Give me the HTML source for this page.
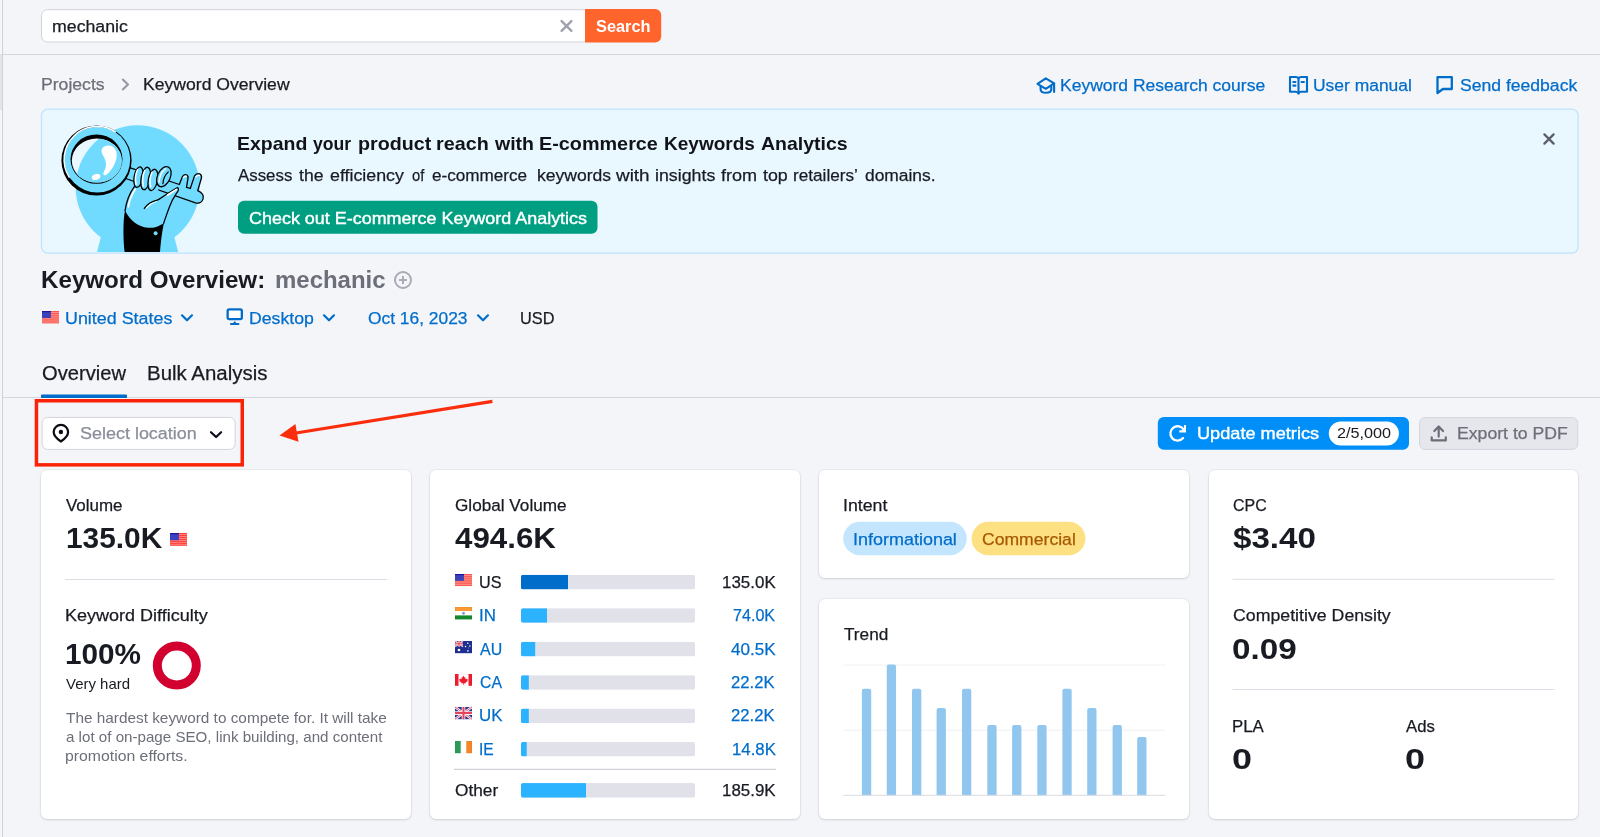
<!DOCTYPE html>
<html lang="en">
<head>
<meta charset="utf-8">
<title>Keyword Overview</title>
<style>
*{box-sizing:border-box;margin:0;padding:0}
html,body{width:1600px;height:837px;overflow:hidden}
body{background:#f4f5f9;font-family:"Liberation Sans",sans-serif;color:#191b23;position:relative}
.a{position:absolute}
.t{position:absolute;white-space:nowrap;transform-origin:0 0;display:block}
.card{position:absolute;background:#fff;border-radius:6px;box-shadow:0 0 0 1px rgba(25,27,35,.045),0 1px 2.5px rgba(25,27,35,.12)}
.hr{position:absolute;height:1px;background:#dcdee5}
.track{position:absolute;left:521px;width:174px;height:14px;background:#e0e1e9;border-radius:2px;overflow:hidden}
.track i{display:block;height:14px;background:#2bb3ff}
.bar{position:absolute;width:9.3px;background:#91c6ed;border-radius:2px 2px 0 0}
svg{position:absolute;overflow:visible}
</style>
</head>
<body>
<div style="position:absolute;left:0;top:0;width:1600px;height:837px;will-change:transform">

<!-- left edge -->
<div class="a" style="left:0;top:0;width:2px;height:837px;background:#f5f6fa"></div>
<div class="a" style="left:0;top:54px;width:2px;height:56px;background:#e3e4ea"></div>
<div class="a" style="left:2px;top:0;width:1px;height:837px;background:#cfd1d8"></div>
<!-- header + tab lines -->
<div class="a" style="left:3px;top:54px;width:1597px;height:1px;background:#d5d7de"></div>
<div class="a" style="left:3px;top:397px;width:1597px;height:1px;background:#d5d7de"></div>

<!-- cards -->
<div class="card" style="left:41px;top:470px;width:370px;height:349px"></div>
<div class="card" style="left:430px;top:470px;width:370px;height:349px"></div>
<div class="card" style="left:819px;top:470px;width:370px;height:108px"></div>
<div class="card" style="left:819px;top:599px;width:370px;height:220px"></div>
<div class="card" style="left:1209px;top:470px;width:369px;height:349px"></div>

<svg style="left:0;top:0" width="1600" height="837" viewBox="0 0 1600 837">
<rect x="41.5" y="9.7" width="548" height="32.3" rx="6" fill="#fff" stroke="#d0d3db"/>
<path d="M585 9 H655.2 a6 6 0 0 1 6 6 V36.5 a6 6 0 0 1 -6 6 H585 Z" fill="#ff642d"/>
<rect x="41.45" y="109.05" width="1536.7" height="144" rx="6.4" fill="#e9f7ff" stroke="#c0e3fe" stroke-width="1.3"/>
<path d="M41 398 V395.6 a1 1 0 0 1 1 -1 H126 a1 1 0 0 1 1 1 V398 Z" fill="#006dca"/>
<rect x="42.1" y="417.4" width="193" height="32" rx="5.5" fill="#fff" stroke="#d2d4dc"/>
<rect x="36.45" y="400.75" width="205.8" height="64.1" fill="none" stroke="#fb2307" stroke-width="3.5"/>
<path d="M492.4 401.4 L296 433" stroke="#fa2d0d" stroke-width="3.2" fill="none"/><path d="M279.5 435.5 L295.4 424.1 L298.5 441.7 Z" fill="#fa2d0d"/>
<rect x="1157.8" y="417.1" width="251.2" height="32.7" rx="6" fill="#008ff8"/>
<rect x="1328.8" y="421.5" width="70.1" height="23.9" rx="11.95" fill="#fff"/>
<rect x="1419.6" y="417.6" width="158.2" height="31.8" rx="5.5" fill="#e6e7ed" stroke="#d3d5dc"/>
<rect x="65" y="579" width="322" height="1" fill="#dcdee5"/>
<circle cx="176.8" cy="665.5" r="19.5" fill="none" stroke="#d1002f" stroke-width="9"/>
<defs><clipPath id="tk0"><rect x="521" y="574.8" width="174" height="14.6" rx="2"/></clipPath><clipPath id="tk1"><rect x="521" y="608.2" width="174" height="14.6" rx="2"/></clipPath><clipPath id="tk2"><rect x="521" y="641.8" width="174" height="14.6" rx="2"/></clipPath><clipPath id="tk3"><rect x="521" y="675.2" width="174" height="14.6" rx="2"/></clipPath><clipPath id="tk4"><rect x="521" y="708.6" width="174" height="14.6" rx="2"/></clipPath><clipPath id="tk5"><rect x="521" y="741.9" width="174" height="14.6" rx="2"/></clipPath><clipPath id="tk6"><rect x="521" y="783.1" width="174" height="14.6" rx="2"/></clipPath></defs>
<g clip-path="url(#tk0)"><rect x="521" y="574.8" width="174" height="14.6" fill="#e0e1e9"/><rect x="521" y="574.8" width="47" height="14.6" fill="#006dca"/></g>
<g clip-path="url(#tk1)"><rect x="521" y="608.2" width="174" height="14.6" fill="#e0e1e9"/><rect x="521" y="608.2" width="26" height="14.6" fill="#2bb3ff"/></g>
<g clip-path="url(#tk2)"><rect x="521" y="641.8" width="174" height="14.6" fill="#e0e1e9"/><rect x="521" y="641.8" width="14.2" height="14.6" fill="#2bb3ff"/></g>
<g clip-path="url(#tk3)"><rect x="521" y="675.2" width="174" height="14.6" fill="#e0e1e9"/><rect x="521" y="675.2" width="7.8" height="14.6" fill="#2bb3ff"/></g>
<g clip-path="url(#tk4)"><rect x="521" y="708.6" width="174" height="14.6" fill="#e0e1e9"/><rect x="521" y="708.6" width="7.8" height="14.6" fill="#2bb3ff"/></g>
<g clip-path="url(#tk5)"><rect x="521" y="741.9" width="174" height="14.6" fill="#e0e1e9"/><rect x="521" y="741.9" width="5.7" height="14.6" fill="#2bb3ff"/></g>
<g clip-path="url(#tk6)"><rect x="521" y="783.1" width="174" height="14.6" fill="#e0e1e9"/><rect x="521" y="783.1" width="65" height="14.6" fill="#2bb3ff"/></g>
<rect x="454" y="768.8" width="322" height="1" fill="#c4c7cf"/>
<rect x="843.2" y="521.8" width="123.5" height="33.4" rx="16.7" fill="#c4e5fe"/>
<rect x="971.6" y="521.8" width="113.8" height="33.4" rx="16.7" fill="#fce081"/>
<rect x="843.2" y="664.6" width="322.2" height="1" fill="#eff0f4"/>
<rect x="843.2" y="729.7" width="322.2" height="1" fill="#eff0f4"/>
<path d="M861.90 795.4 V690.75 a2 2 0 0 1 2 -2 H869.20 a2 2 0 0 1 2 2 V795.4 Z" fill="#91c7ee"/>
<path d="M886.75 795.4 V666.60 a2 2 0 0 1 2 -2 H894.05 a2 2 0 0 1 2 2 V795.4 Z" fill="#91c7ee"/>
<path d="M912.00 795.4 V690.75 a2 2 0 0 1 2 -2 H919.30 a2 2 0 0 1 2 2 V795.4 Z" fill="#91c7ee"/>
<path d="M936.60 795.4 V710.00 a2 2 0 0 1 2 -2 H943.90 a2 2 0 0 1 2 2 V795.4 Z" fill="#91c7ee"/>
<path d="M962.00 795.4 V690.75 a2 2 0 0 1 2 -2 H969.30 a2 2 0 0 1 2 2 V795.4 Z" fill="#91c7ee"/>
<path d="M987.30 795.4 V727.00 a2 2 0 0 1 2 -2 H994.60 a2 2 0 0 1 2 2 V795.4 Z" fill="#91c7ee"/>
<path d="M1012.10 795.4 V727.00 a2 2 0 0 1 2 -2 H1019.40 a2 2 0 0 1 2 2 V795.4 Z" fill="#91c7ee"/>
<path d="M1037.30 795.4 V727.00 a2 2 0 0 1 2 -2 H1044.60 a2 2 0 0 1 2 2 V795.4 Z" fill="#91c7ee"/>
<path d="M1062.40 795.4 V690.75 a2 2 0 0 1 2 -2 H1069.70 a2 2 0 0 1 2 2 V795.4 Z" fill="#91c7ee"/>
<path d="M1087.20 795.4 V710.00 a2 2 0 0 1 2 -2 H1094.50 a2 2 0 0 1 2 2 V795.4 Z" fill="#91c7ee"/>
<path d="M1112.60 795.4 V727.00 a2 2 0 0 1 2 -2 H1119.90 a2 2 0 0 1 2 2 V795.4 Z" fill="#91c7ee"/>
<path d="M1137.20 795.4 V739.00 a2 2 0 0 1 2 -2 H1144.50 a2 2 0 0 1 2 2 V795.4 Z" fill="#91c7ee"/>
<rect x="843.2" y="794.8" width="322.2" height="1" fill="#d9dbe3"/>
<rect x="1232.5" y="578.8" width="322" height="1" fill="#dcdee5"/>
<rect x="1232.5" y="689" width="322" height="1" fill="#dcdee5"/>
</svg>
<svg style="left:42.1px;top:109.7px;overflow:hidden" width="220" height="142.7" viewBox="42.1 109.7 220 142.7">
<defs><clipPath id="lens"><ellipse cx="96.9" cy="160.3" rx="25" ry="22"/></clipPath></defs>
<!-- keyhole -->
<g fill="#70dbff"><circle cx="137.7" cy="187" r="62"/><path d="M101.2 236 L96 256 H179.4 L174.2 236 Z"/></g>
<!-- key shaft + teeth -->
<g fill="#70dbff" stroke="#000" stroke-width="1.3" stroke-linejoin="round">
<path d="M129 167 L179.4 184.2 L182.4 176.6 Q184 173.4 186.6 174.6 Q188.8 175.8 188 178.6 L186.6 187 L190.4 188.2 L194.6 175.6 Q196.6 172.4 199.8 173.6 Q202.4 175 201.4 178.2 L197.8 190.4 Q204.6 193.6 203.2 198.6 Q201.2 204 195.6 202.6 L125.8 178.2 Z"/>
</g>
<path d="M183.6 177.4 Q184.8 175.6 186.4 176" fill="none" stroke="#fff" stroke-width="1.4" stroke-linecap="round"/>
<path d="M196 176.4 Q197.6 174.6 199.6 175.2" fill="none" stroke="#fff" stroke-width="1.4" stroke-linecap="round"/>
<!-- hand: palm + thumb -->
<path d="M125.1 210.6 C126.4 201 129.6 193 134.6 186 L158 186 L159.3 198.8 C165.6 194.6 171.8 190.6 177.6 187.2 C179.6 188.4 178.4 190.8 176.2 193.6 C173.2 198 171 202.6 169.2 207.4 C167.4 212.6 165.4 217.8 163.8 223 L160 232 H128 Z" fill="#70dbff"/>
<g fill="none" stroke="#000" stroke-width="1.3" stroke-linecap="round" stroke-linejoin="round">
<path d="M125.1 210.6 C126.4 201 129.6 193 134.6 186"/>
<path d="M144.4 208.2 C148 203.2 153 200.8 157.2 199.9 L159.3 198.8 C165.6 194.6 171.8 190.6 177.6 187.2 C179.6 188.4 178.4 190.8 176.2 193.6 C173.2 198 171 202.6 169.2 207.4 C167.4 212.6 165.4 217.8 163.8 223"/>
</g>
<path d="M128.4 206.6 C129.6 199.4 132 193.8 135.6 188.8" fill="none" stroke="#fff" stroke-width="1.7" stroke-linecap="round"/>
<path d="M146.6 207.6 C149.8 204 153.2 202.2 156.6 201.4" fill="none" stroke="#fff" stroke-width="1.1" stroke-linecap="round" opacity=".9"/>
<path d="M167.6 195 C171 192.6 174.2 190.6 176.6 189.2" fill="none" stroke="#fff" stroke-width="1.7" stroke-linecap="round"/>
<!-- sleeve -->
<path d="M125.1 210.2 C123 221 123 240 125.2 256 H159.8 C160.4 246 161.6 234 164 222.6 C158 227.2 150 228 148.1 227.4 C138 226.6 130 220 125.1 210.2 Z" fill="#000"/>
<circle cx="155.7" cy="233" r="2" fill="#70dbff"/>
<!-- fingers -->
<g fill="#70dbff" stroke="#000" stroke-width="1.3">
<ellipse cx="138.6" cy="176.8" rx="4.4" ry="10.4" transform="rotate(10 138.6 176.8)"/>
<ellipse cx="145.8" cy="178.2" rx="4.6" ry="11.4" transform="rotate(10 145.8 178.2)"/>
<ellipse cx="153" cy="179.6" rx="4.6" ry="10.8" transform="rotate(11 153 179.6)"/>
<ellipse cx="164" cy="176.4" rx="6.4" ry="10.6" transform="rotate(24 164 176.4)"/>
</g>
<g fill="none" stroke="#fff" stroke-width="1.4" stroke-linecap="round">
<path d="M137.6 169.4 C135.6 173.8 135.2 179.6 136.2 184"/>
<path d="M144.8 170.2 C142.8 174.8 142.4 181 143.4 185.8"/>
<path d="M152.2 171.8 C150.2 176 149.8 182 150.8 186.4"/>
<path d="M165.4 168.4 C161.6 171.6 159.4 176.8 159.2 181.8"/>
</g>
<path d="M168.4 171.6 C165.2 174.6 163.2 178.8 163 183.4" fill="none" stroke="#000" stroke-width="1.2" stroke-linecap="round"/>
<!-- magnifier ring -->
<circle cx="96.6" cy="160.2" r="35.1" fill="#000"/>
<circle cx="97.4" cy="159.3" r="32.9" fill="#70dbff"/>
<path d="M69.24 176.89 A33.2 33.2 0 0 1 115.48 131.46" fill="none" stroke="#fff" stroke-width="1.5" stroke-linecap="round"/>
<ellipse cx="96.6" cy="158.8" rx="26" ry="24.7" fill="#000"/>
<ellipse cx="96.9" cy="160.3" rx="25" ry="22" fill="#e9f7ff"/>
<g clip-path="url(#lens)"><circle cx="137.7" cy="187" r="62" fill="#70dbff"/></g>
<!-- highlights -->
<path d="M102.4 148 C106 143.6 113.8 144.4 116.2 150.6 C118.6 158.4 113.4 168.6 106.6 174.4 C103.8 176 102.6 174 104 171.4 C107.6 165.4 106.2 160.2 103.2 155.4 C101.6 152.6 101 150 102.4 148 Z" fill="#fff"/>
<ellipse cx="96.2" cy="176.6" rx="4.4" ry="2.9" transform="rotate(-18 96.2 176.6)" fill="#fff"/>
</svg>

<svg style="left:0;top:0" width="1600" height="837" viewBox="0 0 1600 837"><rect x="238" y="200.8" width="359.5" height="33" rx="6" fill="#009f81"/></svg>

<svg style="left:560px;top:20px" width="13" height="12" viewBox="0 0 13 12"><path d="M1.6 1.1 L11.4 10.9 M11.4 1.1 L1.6 10.9" stroke="#9fa2ae" stroke-width="2.4" stroke-linecap="round" fill="none"/></svg>
<svg style="left:121px;top:78px" width="9" height="13" viewBox="0 0 9 13"><path d="M1.8 1.6 L7 6.5 L1.8 11.4" stroke="#9498a5" stroke-width="2.1" stroke-linecap="round" stroke-linejoin="round" fill="none"/></svg>
<!-- top-right link icons -->
<svg style="left:1035px;top:76px" width="22" height="20" viewBox="0 0 22 20"><g fill="none" stroke="#006dca" stroke-width="2.1" stroke-linejoin="round" stroke-linecap="round"><path d="M2.5 7.8 L10.8 2.3 L19.1 7.4 L10.8 12.8 Z"/><path d="M19.1 7.6 V16"/><path d="M5.6 10.4 V13.2 Q5.6 16.8 10.9 16.8 Q16.3 16.8 16.3 13.2 V10.4"/></g></svg>
<svg style="left:1288px;top:75px" width="22" height="21" viewBox="0 0 22 21"><g fill="none" stroke="#006dca" stroke-width="2.1" stroke-linejoin="round" stroke-linecap="round"><path d="M2 2 H7.6 Q10 2 10.5 3.3 Q11 2 13.4 2 H19 V16.8 H13.2 Q11.1 16.8 10.5 18.6 Q9.9 16.8 7.8 16.8 H2 Z"/><path d="M10.5 3.4 V18"/><path d="M5.3 7 H7.4 M5.3 10.6 H7.4 M13.6 7 H15.9" stroke-width="2.2"/></g></svg>
<svg style="left:1435px;top:75px" width="20" height="21" viewBox="0 0 20 21"><path d="M2.5 2.2 H16.8 V14 H7.9 L2.5 18 Z" fill="none" stroke="#006dca" stroke-width="2.3" stroke-linejoin="round"/></svg>

<svg style="left:1543.1px;top:132.7px" width="12" height="12" viewBox="0 0 12 12"><path d="M1.4 1.4 L10.6 10.6 M10.6 1.4 L1.4 10.6" stroke="#5c5f6b" stroke-width="2.3" stroke-linecap="round" fill="none"/></svg>
<svg style="left:394px;top:271px" width="18" height="18" viewBox="0 0 18 18"><circle cx="9" cy="9" r="8" fill="none" stroke="#a9abb6" stroke-width="2"/><path d="M9 5 V13 M5 9 H13" stroke="#a9abb6" stroke-width="2" fill="none"/></svg>
<!-- filter row icons -->
<svg style="left:42px;top:311.3px" width="17" height="12.4" viewBox="0 0 17 12.4"><rect width="17" height="12.4" fill="#fa544c"/><g fill="#ff9791"><rect y="1" width="17" height=".9"/><rect y="2.9" width="17" height=".9"/><rect y="4.8" width="17" height=".9"/><rect y="6.7" width="17" height=".9"/><rect y="8.6" width="17" height=".9"/><rect y="10.5" width="17" height=".9"/></g><rect width="8.9" height="7" fill="#3b41b9"/><rect width="8.9" height="1.2" fill="#1f169f"/></svg>
<svg style="left:180px;top:313px" width="14" height="10" viewBox="0 0 14 10"><path d="M2 2.3 L7 7.3 L12 2.3" fill="none" stroke="#006dca" stroke-width="2.2" stroke-linecap="round" stroke-linejoin="round"/></svg>
<svg style="left:225px;top:307px" width="20" height="20" viewBox="0 0 20 20"><rect x="2.65" y="2.4" width="14.2" height="9.7" rx="1.6" fill="#fff" stroke="#006dca" stroke-width="2.3"/><path d="M8.2 15.9 L9.75 14.1 L11.3 15.9 Z" fill="#006dca"/><path d="M6 17 H13.4" stroke="#006dca" stroke-width="2.1" stroke-linecap="round"/></svg>
<svg style="left:322px;top:313px" width="14" height="10" viewBox="0 0 14 10"><path d="M2 2.3 L7 7.3 L12 2.3" fill="none" stroke="#006dca" stroke-width="2.2" stroke-linecap="round" stroke-linejoin="round"/></svg>
<svg style="left:475.6px;top:313px" width="14" height="10" viewBox="0 0 14 10"><path d="M2 2.3 L7 7.3 L12 2.3" fill="none" stroke="#006dca" stroke-width="2.2" stroke-linecap="round" stroke-linejoin="round"/></svg>

<svg style="left:50px;top:421px" width="22" height="24" viewBox="0 0 22 24"><path d="M10.9 20.5 C6.3 17.5 3.7 15 3.7 11.1 A7.2 7.2 0 0 1 18.1 11.1 C18.1 15 15.5 17.5 10.9 20.5 Z" fill="none" stroke="#0c0c14" stroke-width="2.2" stroke-linejoin="round"/><circle cx="10.9" cy="11" r="2.2" fill="#0c0c14"/></svg>
<svg style="left:209px;top:429px" width="14" height="10" viewBox="0 0 14 10"><path d="M2 3.2 L7.1 8 L12.1 3.2" fill="none" stroke="#0c0c1a" stroke-width="2.2" stroke-linecap="round" stroke-linejoin="round"/></svg>

<svg style="left:1167px;top:424px" width="22" height="20" viewBox="0 0 22 20"><path d="M16.9 6 A7.2 7.2 0 1 0 16.1 14.1" fill="none" stroke="#fff" stroke-width="2.3" stroke-linecap="round"/><path d="M17.95 1.1 V7.4 H12.3" fill="none" stroke="#fff" stroke-width="2.1" stroke-linejoin="miter"/><path d="M17.9 3.4 L14.4 7 L17.9 7 Z" fill="#fff"/></svg>
<svg style="left:1429px;top:424px" width="20" height="20" viewBox="0 0 20 20"><g fill="none" stroke="#6c6e79" stroke-width="2.2" stroke-linecap="round" stroke-linejoin="round"><path d="M2.7 13.4 V16.4 H16.8 V13.4"/><path d="M9.7 2.8 V12.6"/><path d="M5.3 7 L9.7 2.6 L14.1 7"/></g></svg>

<svg style="left:169.7px;top:533px" width="17" height="12.8" viewBox="0 0 17 12.4" preserveAspectRatio="none"><rect width="17" height="12.4" fill="#ff3f38"/><g fill="#ff8781"><rect y="1" width="17" height=".9"/><rect y="2.9" width="17" height=".9"/><rect y="4.8" width="17" height=".9"/><rect y="6.7" width="17" height=".9"/><rect y="8.6" width="17" height=".9"/><rect y="10.5" width="17" height=".9"/></g><rect width="8.9" height="7" fill="#3d40c2"/><rect width="8.9" height="1.2" fill="#1f169f"/></svg>

<!-- US -->
<svg style="left:455.3px;top:574px" width="17" height="12.1" viewBox="0 0 17 12.4" preserveAspectRatio="none"><rect width="17" height="12.4" fill="#fa544c"/><g fill="#ff9791"><rect y="1" width="17" height=".9"/><rect y="2.9" width="17" height=".9"/><rect y="4.8" width="17" height=".9"/><rect y="6.7" width="17" height=".9"/><rect y="8.6" width="17" height=".9"/><rect y="10.5" width="17" height=".9"/></g><rect width="8.9" height="7" fill="#3b41b9"/><rect width="8.9" height="1.2" fill="#1f169f"/></svg>
<!-- IN -->
<svg style="left:455.3px;top:607px" width="17" height="12.4" viewBox="0 0 17 12.4"><rect width="17" height="12.4" fill="#fff"/><rect width="17" height="4" fill="#fb9a32"/><rect y="8.4" width="17" height="4" fill="#14892c"/><circle cx="8.5" cy="6.2" r="1.5" fill="#7f98d8"/><rect x=".25" y=".25" width="16.5" height="11.9" fill="none" stroke="#000" stroke-opacity=".08" stroke-width=".5"/></svg>
<!-- AU -->
<svg style="left:455.3px;top:640.5px" width="17" height="12.2" viewBox="0 0 17 12.2"><rect width="17" height="12.2" fill="#1d2f8f"/><g><rect width="8" height="5.6" fill="#2a3a98"/><path d="M0 0 L8 5.6 M8 0 L0 5.6" stroke="#fff" stroke-width="1.3"/><path d="M0 0 L8 5.6 M8 0 L0 5.6" stroke="#e8475b" stroke-width=".5"/><path d="M4 0 V5.6 M0 2.8 H8" stroke="#fff" stroke-width="1.9"/><path d="M4 0 V5.6 M0 2.8 H8" stroke="#e8344e" stroke-width="1.1"/></g><circle cx="4" cy="9" r="1.35" fill="#fff"/><circle cx="12.8" cy="2.2" r=".75" fill="#fff"/><circle cx="10.5" cy="5.6" r=".75" fill="#fff"/><circle cx="14.9" cy="5" r=".75" fill="#fff"/><circle cx="12.9" cy="9.9" r=".8" fill="#fff"/><circle cx="13.9" cy="6.9" r=".45" fill="#fff"/></svg>
<!-- CA -->
<svg style="left:455.3px;top:674px" width="17" height="11.8" viewBox="0 0 17 11.8"><rect width="17" height="11.8" fill="#fff"/><rect width="3.5" height="11.8" fill="#ee1c2e"/><rect x="13.5" width="3.5" height="11.8" fill="#ee1c2e"/><path d="M8.5 1.6 L9.4 3.4 L10.5 2.9 L10.2 5.2 L11.4 4.4 L11.7 5.2 L12.9 5.1 L12.3 6.5 L12.8 6.9 L10.4 8.7 L10.7 9.5 L8.8 9.3 L8.8 10.9 L8.2 10.9 L8.2 9.3 L6.3 9.5 L6.6 8.7 L4.2 6.9 L4.7 6.5 L4.1 5.1 L5.3 5.2 L5.6 4.4 L6.8 5.2 L6.5 2.9 L7.6 3.4 Z" fill="#ee1c2e"/><rect x=".25" y=".25" width="16.5" height="11.3" fill="none" stroke="#000" stroke-opacity=".06" stroke-width=".5"/></svg>
<!-- UK -->
<svg style="left:455.3px;top:707px" width="17" height="12.2" viewBox="0 0 17 12.2"><rect width="17" height="12.2" fill="#26348f"/><path d="M0 0 L17 12.2 M17 0 L0 12.2" stroke="#f4e9f0" stroke-width="2.6"/><path d="M0 0 L17 12.2 M17 0 L0 12.2" stroke="#e4536a" stroke-width=".9"/><path d="M8.5 0 V12.2 M0 6.1 H17" stroke="#f7eef2" stroke-width="3.6"/><path d="M8.5 0 V12.2 M0 6.1 H17" stroke="#e4435c" stroke-width="2"/></svg>
<!-- IE -->
<svg style="left:455.3px;top:740.5px" width="17" height="12.2" viewBox="0 0 17 12.2"><rect width="17" height="12.2" fill="#fff"/><rect width="5.7" height="12.2" fill="#2a9a55"/><rect x="11.3" width="5.7" height="12.2" fill="#f5852a"/><rect x=".25" y=".25" width="16.5" height="11.7" fill="none" stroke="#000" stroke-opacity=".05" stroke-width=".5"/></svg>


<div class="t" style="left:51.77px;top:15.00px;font-size:17.4px;line-height:23px;-webkit-text-stroke:.25px currentColor;color:#191b23;transform:scaleX(1.0196)">mechanic</div>
<div class="t" style="left:595.97px;top:15.00px;font-size:17px;line-height:23px;font-weight:bold;color:#fff;transform:scaleX(0.9623)">Search</div>
<div class="t" style="left:41.20px;top:73.30px;font-size:17.4px;line-height:23px;-webkit-text-stroke:.25px currentColor;color:#6c6e79;transform:scaleX(1.0119)">Projects</div>
<div class="t" style="left:143.32px;top:73.30px;font-size:17.4px;line-height:23px;-webkit-text-stroke:.25px currentColor;color:#191b23;transform:scaleX(1.0111)">Keyword Overview</div>
<div class="t" style="left:1059.88px;top:73.50px;font-size:17.4px;line-height:23px;-webkit-text-stroke:.25px currentColor;color:#006dca;transform:scaleX(1.0057)">Keyword Research course</div>
<div class="t" style="left:1312.73px;top:73.50px;font-size:17.4px;line-height:23px;-webkit-text-stroke:.25px currentColor;color:#006dca;transform:scaleX(1.0031)">User manual</div>
<div class="t" style="left:1459.95px;top:73.50px;font-size:17.4px;line-height:23px;-webkit-text-stroke:.25px currentColor;color:#006dca;transform:scaleX(1.0102)">Send feedback</div>
<div class="t" style="left:236.91px;top:131.00px;font-size:19px;line-height:25px;font-weight:bold;color:#111318;transform:scaleX(1.0249)">Expand</div>
<div class="t" style="left:312.55px;top:131.00px;font-size:19px;line-height:25px;font-weight:bold;color:#111318;transform:scaleX(0.9258)">your</div>
<div class="t" style="left:357.87px;top:131.00px;font-size:19px;line-height:25px;font-weight:bold;color:#111318;transform:scaleX(1.0355)">product</div>
<div class="t" style="left:436.18px;top:131.00px;font-size:19px;line-height:25px;font-weight:bold;color:#111318;transform:scaleX(1.0397)">reach</div>
<div class="t" style="left:494.88px;top:131.00px;font-size:19px;line-height:25px;font-weight:bold;color:#111318;transform:scaleX(1.0261)">with</div>
<div class="t" style="left:538.80px;top:131.00px;font-size:19px;line-height:25px;font-weight:bold;color:#111318;transform:scaleX(1.0422)">E-commerce</div>
<div class="t" style="left:663.96px;top:131.00px;font-size:19px;line-height:25px;font-weight:bold;color:#111318;transform:scaleX(1.0012)">Keywords</div>
<div class="t" style="left:760.91px;top:131.00px;font-size:19px;line-height:25px;font-weight:bold;color:#111318;transform:scaleX(1.0259)">Analytics</div>
<div class="t" style="left:238.12px;top:163.50px;font-size:17.4px;line-height:23px;-webkit-text-stroke:.25px currentColor;color:#191b23;transform:scaleX(0.9692)">Assess</div>
<div class="t" style="left:299.01px;top:163.50px;font-size:17.4px;line-height:23px;-webkit-text-stroke:.25px currentColor;color:#191b23;transform:scaleX(1.0104)">the</div>
<div class="t" style="left:329.78px;top:163.50px;font-size:17.4px;line-height:23px;-webkit-text-stroke:.25px currentColor;color:#191b23;transform:scaleX(1.0232)">efficiency</div>
<div class="t" style="left:412.06px;top:163.50px;font-size:17.4px;line-height:23px;-webkit-text-stroke:.25px currentColor;color:#191b23;transform:scaleX(0.8460)">of</div>
<div class="t" style="left:432.41px;top:163.50px;font-size:17.4px;line-height:23px;-webkit-text-stroke:.25px currentColor;color:#191b23;transform:scaleX(0.9845)">e-commerce</div>
<div class="t" style="left:537.06px;top:163.50px;font-size:17.4px;line-height:23px;-webkit-text-stroke:.25px currentColor;color:#191b23;transform:scaleX(1.0088)">keywords</div>
<div class="t" style="left:616.16px;top:163.50px;font-size:17.4px;line-height:23px;-webkit-text-stroke:.25px currentColor;color:#191b23;transform:scaleX(1.0871)">with</div>
<div class="t" style="left:655.04px;top:163.50px;font-size:17.4px;line-height:23px;-webkit-text-stroke:.25px currentColor;color:#191b23;transform:scaleX(1.0220)">insights</div>
<div class="t" style="left:720.95px;top:163.50px;font-size:17.4px;line-height:23px;-webkit-text-stroke:.25px currentColor;color:#191b23;transform:scaleX(1.0383)">from</div>
<div class="t" style="left:762.81px;top:163.50px;font-size:17.4px;line-height:23px;-webkit-text-stroke:.25px currentColor;color:#191b23;transform:scaleX(1.0221)">top</div>
<div class="t" style="left:792.55px;top:163.50px;font-size:17.4px;line-height:23px;-webkit-text-stroke:.25px currentColor;color:#191b23;transform:scaleX(0.9868)">retailers’</div>
<div class="t" style="left:865.41px;top:163.50px;font-size:17.4px;line-height:23px;-webkit-text-stroke:.25px currentColor;color:#191b23;transform:scaleX(1.0001)">domains.</div>
<div class="t" style="left:248.78px;top:206.60px;font-size:16.5px;line-height:22px;-webkit-text-stroke:.4px currentColor;color:#fff;transform:scaleX(1.0874)">Check out E-commerce Keyword Analytics</div>
<div class="t" style="left:41.12px;top:264.50px;font-size:24px;line-height:30px;font-weight:bold;color:#191b23;transform:scaleX(1.0065)">Keyword Overview:</div>
<div class="t" style="left:274.86px;top:264.50px;font-size:24px;line-height:30px;font-weight:bold;color:#6c6e79;transform:scaleX(0.9988)">mechanic</div>
<div class="t" style="left:65.05px;top:307.20px;font-size:17.4px;line-height:23px;-webkit-text-stroke:.25px currentColor;color:#006dca;transform:scaleX(1.0286)">United States</div>
<div class="t" style="left:249.01px;top:307.20px;font-size:17.4px;line-height:23px;-webkit-text-stroke:.25px currentColor;color:#006dca;transform:scaleX(1.0162)">Desktop</div>
<div class="t" style="left:367.60px;top:307.20px;font-size:17.4px;line-height:23px;-webkit-text-stroke:.25px currentColor;color:#006dca;transform:scaleX(0.9993)">Oct 16, 2023</div>
<div class="t" style="left:520.06px;top:307.20px;font-size:17px;line-height:23px;-webkit-text-stroke:.25px currentColor;color:#191b23;transform:scaleX(0.9591)">USD</div>
<div class="t" style="left:41.50px;top:360.20px;font-size:19.5px;line-height:26px;-webkit-text-stroke:.25px currentColor;color:#191b23;transform:scaleX(1.0328)">Overview</div>
<div class="t" style="left:146.68px;top:360.20px;font-size:19.5px;line-height:26px;-webkit-text-stroke:.25px currentColor;color:#191b23;transform:scaleX(1.0479)">Bulk Analysis</div>
<div class="t" style="left:80.04px;top:422.00px;font-size:17.4px;line-height:23px;-webkit-text-stroke:.25px currentColor;color:#8a8e9b;transform:scaleX(1.0325)">Select location</div>
<div class="t" style="left:1197.40px;top:422.20px;font-size:16.5px;line-height:22px;-webkit-text-stroke:.4px currentColor;color:#fff;transform:scaleX(1.1002)">Update metrics</div>
<div class="t" style="left:1337.35px;top:423.40px;font-size:14.5px;line-height:20px;color:#191b23;transform:scaleX(1.1193)">2/5,000</div>
<div class="t" style="left:1456.86px;top:422.20px;font-size:17.4px;line-height:23px;-webkit-text-stroke:.25px currentColor;color:#6c6e79;transform:scaleX(1.0151)">Export to PDF</div>
<div class="t" style="left:65.62px;top:493.75px;font-size:17.4px;line-height:23px;-webkit-text-stroke:.25px currentColor;color:#191b23;transform:scaleX(0.9745)">Volume</div>
<div class="t" style="left:65.94px;top:520.00px;font-size:30px;line-height:36px;font-weight:bold;color:#191b23;transform:scaleX(0.9941)">135.0K</div>
<div class="t" style="left:64.74px;top:604.00px;font-size:17.4px;line-height:23px;-webkit-text-stroke:.25px currentColor;color:#191b23;transform:scaleX(1.0352)">Keyword Difficulty</div>
<div class="t" style="left:64.94px;top:635.70px;font-size:30px;line-height:36px;font-weight:bold;color:#191b23;transform:scaleX(0.9914)">100%</div>
<div class="t" style="left:65.98px;top:674.00px;font-size:14.5px;line-height:20px;color:#191b23;transform:scaleX(1.0323)">Very hard</div>
<div class="t" style="left:65.66px;top:707.80px;font-size:14.5px;line-height:20px;color:#6c6e79;transform:scaleX(1.0587)">The hardest keyword to compete for. It will take</div>
<div class="t" style="left:66.01px;top:727.00px;font-size:14.5px;line-height:20px;color:#6c6e79;transform:scaleX(1.0439)">a lot of on-page SEO, link building, and content</div>
<div class="t" style="left:64.70px;top:745.90px;font-size:14.5px;line-height:20px;color:#6c6e79;transform:scaleX(1.0889)">promotion efforts.</div>
<div class="t" style="left:454.72px;top:494.00px;font-size:17.4px;line-height:23px;-webkit-text-stroke:.25px currentColor;color:#191b23;transform:scaleX(0.9863)">Global Volume</div>
<div class="t" style="left:455.26px;top:520.00px;font-size:30px;line-height:36px;font-weight:bold;color:#191b23;transform:scaleX(1.0430)">494.6K</div>
<div class="t" style="left:479.05px;top:570.50px;font-size:17px;line-height:23px;-webkit-text-stroke:.25px currentColor;color:#191b23;transform:scaleX(0.9513)">US</div>
<div class="t" style="left:479.17px;top:604.00px;font-size:17px;line-height:23px;-webkit-text-stroke:.25px currentColor;color:#006dca;transform:scaleX(0.9942)">IN</div>
<div class="t" style="left:480.05px;top:637.50px;font-size:17px;line-height:23px;-webkit-text-stroke:.25px currentColor;color:#006dca;transform:scaleX(0.9378)">AU</div>
<div class="t" style="left:479.90px;top:671.00px;font-size:17px;line-height:23px;-webkit-text-stroke:.25px currentColor;color:#006dca;transform:scaleX(0.9289)">CA</div>
<div class="t" style="left:478.88px;top:704.00px;font-size:17px;line-height:23px;-webkit-text-stroke:.25px currentColor;color:#006dca;transform:scaleX(0.9921)">UK</div>
<div class="t" style="left:478.97px;top:737.50px;font-size:17px;line-height:23px;-webkit-text-stroke:.25px currentColor;color:#006dca;transform:scaleX(0.9201)">IE</div>
<div class="t" style="left:455.07px;top:778.90px;font-size:17px;line-height:23px;-webkit-text-stroke:.25px currentColor;color:#191b23;transform:scaleX(1.0149)">Other</div>
<div class="t" style="left:722.19px;top:570.50px;font-size:17px;line-height:23px;-webkit-text-stroke:.25px currentColor;color:#191b23;transform:scaleX(0.9963)">135.0K</div>
<div class="t" style="left:732.60px;top:604.00px;font-size:17px;line-height:23px;-webkit-text-stroke:.25px currentColor;color:#006dca;transform:scaleX(0.9469)">74.0K</div>
<div class="t" style="left:730.93px;top:637.50px;font-size:17px;line-height:23px;-webkit-text-stroke:.25px currentColor;color:#006dca;transform:scaleX(1.0064)">40.5K</div>
<div class="t" style="left:731.49px;top:671.00px;font-size:17px;line-height:23px;-webkit-text-stroke:.25px currentColor;color:#006dca;transform:scaleX(0.9798)">22.2K</div>
<div class="t" style="left:731.49px;top:704.00px;font-size:17px;line-height:23px;-webkit-text-stroke:.25px currentColor;color:#006dca;transform:scaleX(0.9798)">22.2K</div>
<div class="t" style="left:732.21px;top:737.50px;font-size:17px;line-height:23px;-webkit-text-stroke:.25px currentColor;color:#006dca;transform:scaleX(0.9882)">14.8K</div>
<div class="t" style="left:722.04px;top:778.90px;font-size:17px;line-height:23px;-webkit-text-stroke:.25px currentColor;color:#191b23;transform:scaleX(0.9956)">185.9K</div>
<div class="t" style="left:843.13px;top:493.80px;font-size:17.4px;line-height:23px;-webkit-text-stroke:.25px currentColor;color:#191b23;transform:scaleX(1.0205)">Intent</div>
<div class="t" style="left:852.79px;top:527.70px;font-size:17.4px;line-height:23px;-webkit-text-stroke:.25px currentColor;color:#006dca;transform:scaleX(1.0331)">Informational</div>
<div class="t" style="left:981.94px;top:527.70px;font-size:17.4px;line-height:23px;-webkit-text-stroke:.25px currentColor;color:#a75800;transform:scaleX(1.0111)">Commercial</div>
<div class="t" style="left:843.93px;top:622.50px;font-size:17.4px;line-height:23px;-webkit-text-stroke:.25px currentColor;color:#191b23;transform:scaleX(0.9881)">Trend</div>
<div class="t" style="left:1232.63px;top:494.25px;font-size:17px;line-height:23px;-webkit-text-stroke:.25px currentColor;color:#191b23;transform:scaleX(0.9416)">CPC</div>
<div class="t" style="left:1233.41px;top:519.50px;font-size:30px;line-height:36px;font-weight:bold;color:#191b23;transform:scaleX(1.1050)">$3.40</div>
<div class="t" style="left:1232.65px;top:604.00px;font-size:17.4px;line-height:23px;-webkit-text-stroke:.25px currentColor;color:#191b23;transform:scaleX(1.0200)">Competitive Density</div>
<div class="t" style="left:1232.04px;top:631.10px;font-size:30px;line-height:36px;font-weight:bold;color:#191b23;transform:scaleX(1.1072)">0.09</div>
<div class="t" style="left:1231.63px;top:714.60px;font-size:17px;line-height:23px;-webkit-text-stroke:.25px currentColor;color:#191b23;transform:scaleX(0.9891)">PLA</div>
<div class="t" style="left:1405.95px;top:714.60px;font-size:17px;line-height:23px;-webkit-text-stroke:.25px currentColor;color:#191b23;transform:scaleX(0.9839)">Ads</div>
<div class="t" style="left:1232.08px;top:741.20px;font-size:30px;line-height:36px;font-weight:bold;color:#191b23;transform:scaleX(1.1995)">0</div>
<div class="t" style="left:1404.82px;top:741.20px;font-size:30px;line-height:36px;font-weight:bold;color:#191b23;transform:scaleX(1.1995)">0</div>
</div>
</body>
</html>
